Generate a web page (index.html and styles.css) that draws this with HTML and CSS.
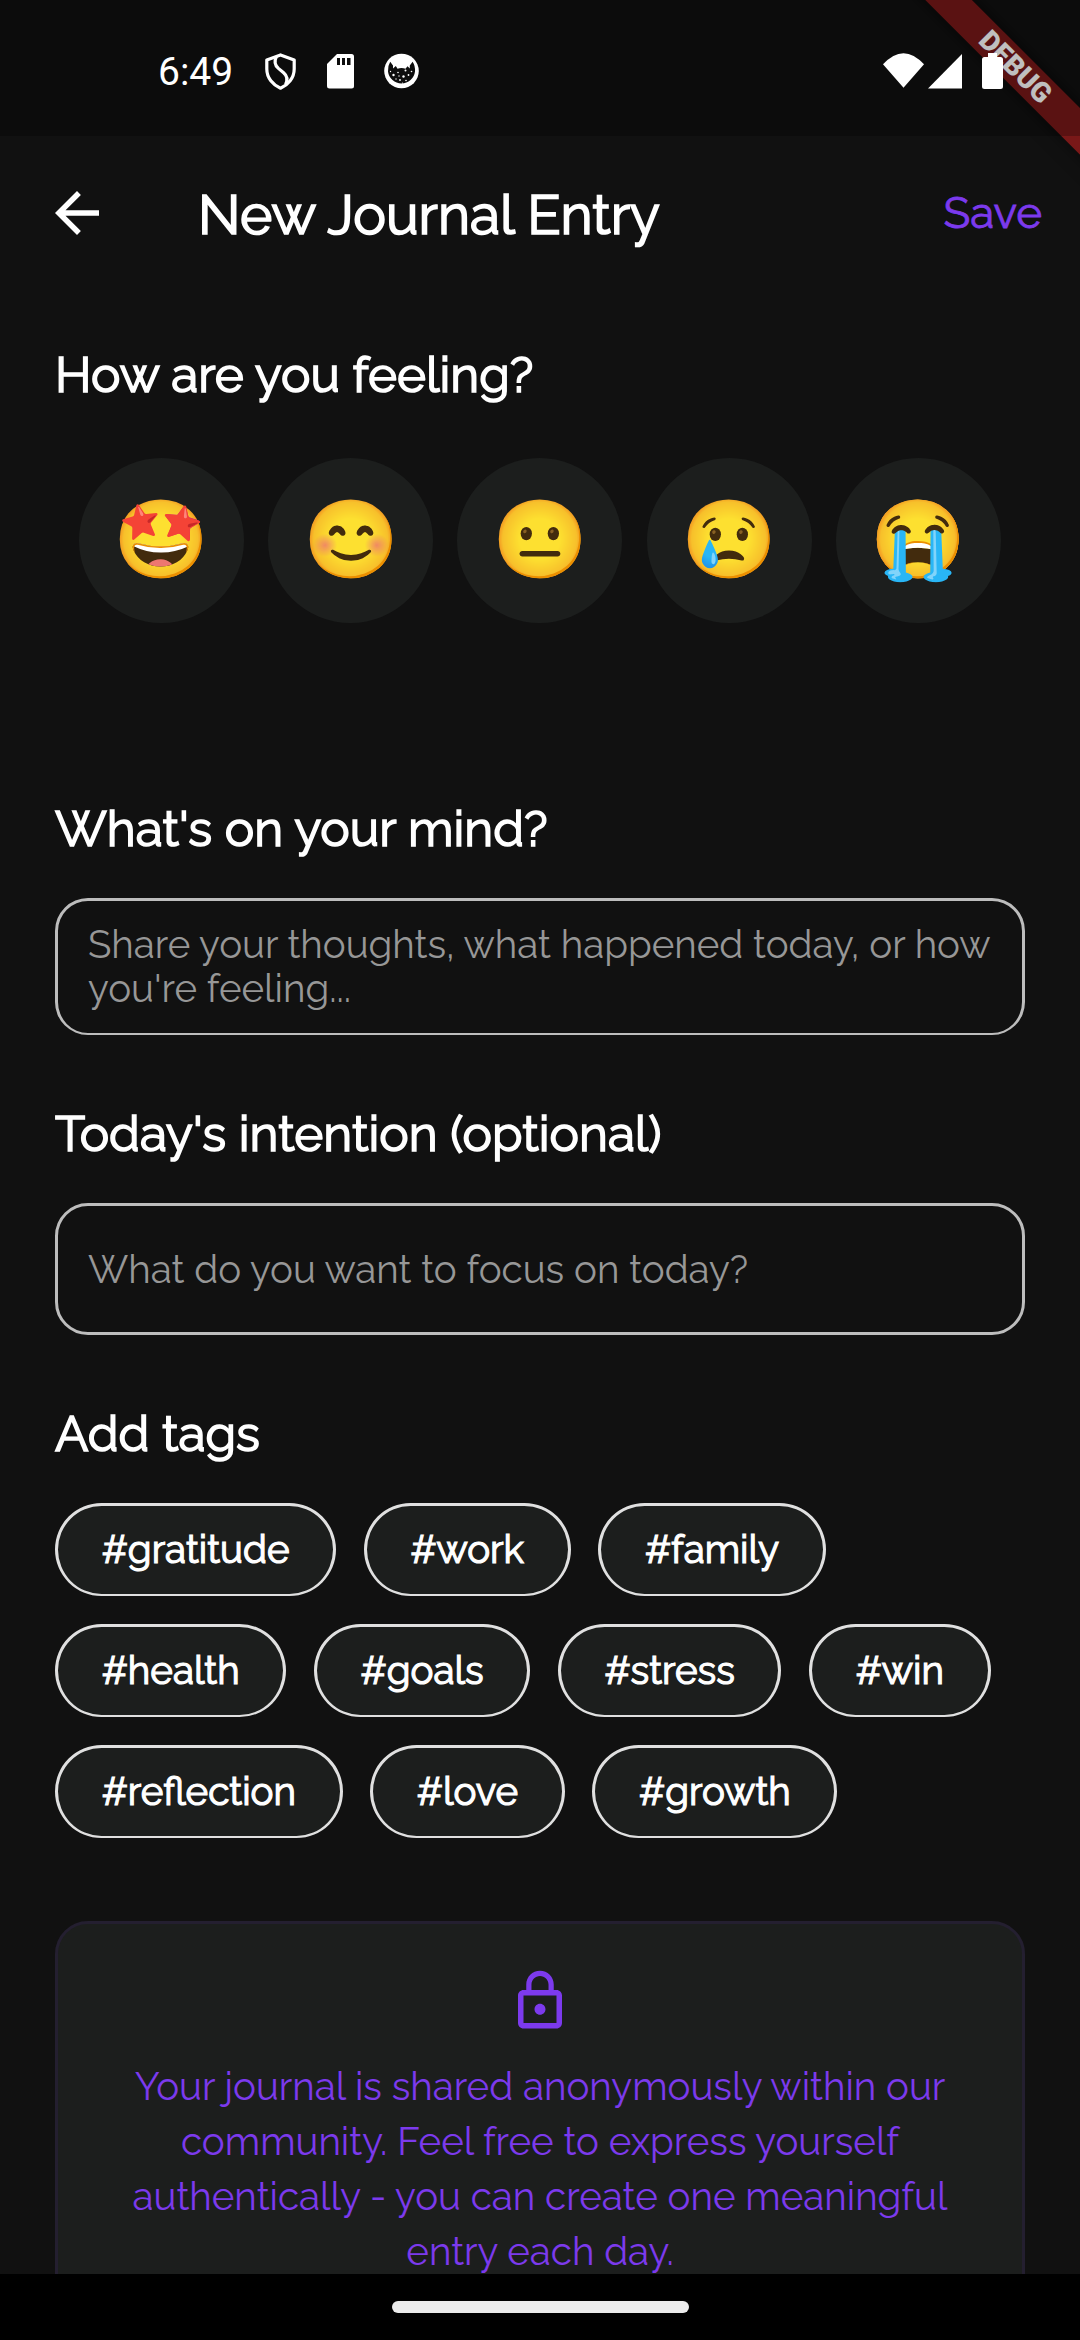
FILE: index.html
```
<!DOCTYPE html>
<html lang="en">
<head>
<meta charset="utf-8">
<title>New Journal Entry</title>
<link rel="stylesheet" href="styles.css">
</head>
<body>
<div class="screen">
  <header class="status-bar">
    <span class="clock">6:49</span>
    <svg class="shield" width="31" height="37" viewBox="0 0 31 37" fill="none" stroke="#fff" stroke-width="3.2" stroke-linejoin="round"><path d="M15.5 1.9 29.2 6.9V16C29.2 25 23 32 15.5 35.2 8 32 1.8 25 1.8 16V6.9Z"/><path d="M11.4 3.6C9.2 8 9.6 12 13.4 15.4L18.6 19.8C22.4 23 22.8 27 20.6 31.4"/></svg>
    <svg class="sd" width="27" height="35" viewBox="0 0 27 35"><path fill="#fff" d="M10 0h14.5A2.5 2.5 0 0 1 27 2.5V32a2.5 2.5 0 0 1-2.5 2.5h-22A2.5 2.5 0 0 1 0 32V10Z"/><path fill="#0d0d0d" d="M10 4h3v7h-3zM15 4h3v7h-3zM20 4h3.500v7H20z"/></svg>
    <svg class="cat" width="35" height="36" viewBox="0 0 35 36"><circle cx="17.500" cy="18" r="17.300" fill="#fff"/><path fill="#0d0d0d" d="M6.200 8.800 9 12.400V15.500L11.800 13 13.500 15.800Q17.500 14.200 21.500 15.800L23.500 13.200 25.800 15.400V12.400L28.600 8.800Q31.400 13 31 18.500A13.600 13.600 0 0 1 4 18.500Q3.600 13 6.200 8.800Z"/><g fill="#fff"><circle cx="9.500" cy="22" r="1.200"/><circle cx="14" cy="19.500" r=".8"/><circle cx="19.500" cy="23.500" r="1.200"/><circle cx="21.500" cy="17.500" r="1"/><circle cx="16" cy="27" r=".9"/><circle cx="24.500" cy="22" r=".9"/><circle cx="6.500" cy="18.500" r=".7"/><circle cx="12" cy="26" r=".7"/><circle cx="27.500" cy="18.500" r=".8"/><circle cx="22" cy="27.500" r=".8"/><circle cx="15" cy="23" r=".7"/><circle cx="18.500" cy="30" r=".6"/></g></svg>
    <span class="fill"></span>
    <svg class="wifi" width="41" height="35" viewBox="0 0 41 35"><path fill="#fff" d="M0 11.300Q20.500-11 41 11.300L20.500 34.800Z"/></svg>
    <svg class="signal" width="34" height="35" viewBox="0 0 34 35"><path fill="#fff" d="M34 0V34.500H0Z"/></svg>
    <svg class="battery" width="21" height="36" viewBox="0 0 21 36"><path fill="#fff" d="M6 0h9v4h3.500A2.500 2.500 0 0 1 21 6.500v27a2.500 2.500 0 0 1-2.500 2.500h-16A2.500 2.500 0 0 1 0 33.500v-27A2.500 2.500 0 0 1 2.500 4H6z"/></svg>
  </header>

  <nav class="app-bar">
    <svg class="back" width="66" height="66" viewBox="0 0 24 24" fill="#fff"><path d="M20 11H7.830l5.590-5.590L12 4l-8 8 8 8 1.410-1.410L7.830 13H20v-2z"/></svg>
    <h1 class="title">New Journal Entry</h1>
    <span class="save">Save</span>
  </nav>

  <main class="content">
    <h2 class="heading">How are you feeling?</h2>
    <div class="moods">
      <span class="mood">🤩</span>
      <span class="mood">😊</span>
      <span class="mood">😐</span>
      <span class="mood">😢</span>
      <span class="mood">😭</span>
    </div>

    <h2 class="heading">What's on your mind?</h2>
    <div class="field field-thoughts">Share your thoughts, what happened today, or how you're feeling...</div>

    <h2 class="heading">Today's intention (optional)</h2>
    <div class="field field-intention">What do you want to focus on today?</div>

    <h2 class="heading">Add tags</h2>
    <div class="tags">
      <span class="tag">#gratitude</span>
      <span class="tag">#work</span>
      <span class="tag">#family</span>
      <span class="tag">#health</span>
      <span class="tag">#goals</span>
      <span class="tag">#stress</span>
      <span class="tag">#win</span>
      <span class="tag">#reflection</span>
      <span class="tag">#love</span>
      <span class="tag">#growth</span>
    </div>

    <section class="notice">
      <svg width="66" height="66" viewBox="0 0 24 24" fill="#7c3aed"><path d="M12 17c1.100 0 2-.9 2-2s-.9-2-2-2-2 .9-2 2 .9 2 2 2zm6-9h-1V6c0-2.760-2.240-5-5-5S7 3.240 7 6v2H6c-1.100 0-2 .9-2 2v10c0 1.100.9 2 2 2h12c1.100 0 2-.9 2-2V10c0-1.100-.9-2-2-2zM8.900 6c0-1.710 1.390-3.100 3.100-3.100s3.100 1.390 3.100 3.100v2H8.900V6zM18 20H6V10h12v10z"/></svg>
      <p class="notice-text">Your journal is shared anonymously within our community. Feel free to express yourself authentically - you can create one meaningful entry each day.</p>
    </section>
  </main>

  <footer class="nav-bar"><span class="handle"></span></footer>
  <div class="debug-banner">DEBUG</div>
</div>
</body>
</html>
```
FILE: styles.css
```
* { box-sizing: border-box; margin: 0; padding: 0; }

body { background: #111; }

.screen {
  position: relative;
  display: flex;
  flex-direction: column;
  width: 1080px;
  height: 2340px;
  overflow: hidden;
  background: #111;
  color: #fff;
  font-family: Raleway, Lato, sans-serif;
  font-weight: 400;
}

.screen svg { display: block; flex: none; }

/* Status bar: a translucent scrim above the debug banner */
.status-bar {
  position: relative;
  z-index: 2;
  display: flex;
  flex: none;
  align-items: flex-start;
  height: 136px;
  padding: 53px 77px 0 158px;
  background: rgba(0, 0, 0, .25);
}
.clock {
  width: 106.500px;
  font: 400 39px/39px Roboto, sans-serif;
}
.shield { margin-right: 31.500px; }
.sd { margin: 1px 30px 0 0; }
.fill { flex: 1; }
.wifi { margin-right: 4px; }
.signal { margin: 1px 20px 0 0; }

.app-bar {
  display: flex;
  flex: none;
  align-items: center;
  height: 154px;
  padding: 0 38px 0 44px;
}
.title {
  flex: 1;
  padding: 4px 0 0 88px;
  font-size: 55px;
  font-weight: 400;
  line-height: 64px;
  -webkit-text-stroke: .03125em currentColor;
}
.save {
  color: #7c3aed;
  font-size: 44px;
  line-height: 52px;
  -webkit-text-stroke: .8px currentColor;
}

.content {
  flex: 1;
  min-height: 0;
  padding: 56px 55px 0;
  overflow: hidden;
}
.heading {
  margin-bottom: 40px;
  font-size: 49.500px;
  font-weight: 400;
  line-height: 58px;
  -webkit-text-stroke: .03125em currentColor;
}

.moods {
  display: flex;
  justify-content: space-evenly;
  margin: 54px 0 177px;
}
.mood {
  display: flex;
  align-items: center;
  justify-content: center;
  width: 165px;
  height: 165px;
  padding-bottom: 2px;
  border-radius: 50%;
  background: #1c1e1d;
  font: 77px/90px "Noto Color Emoji", sans-serif;
}

.field {
  display: flex;
  align-items: center;
  margin-bottom: 70px;
  padding: 0 30px;
  border: 3px solid #bdbdbd;
  border-radius: 33px;
  color: #979797;
  font-size: 38.500px;
  line-height: 44px;
}
.field-thoughts { height: 137px; border-bottom-width: 2px; }
.field-intention { height: 132px; padding-top: 2px; }

.tags {
  display: flex;
  flex-wrap: wrap;
  gap: 28px 27.500px;
}
.tag {
  height: 93px;
  padding: 0 43.700px;
  border: 3px solid #e0e0e0;
  border-bottom-width: 2px;
  border-radius: 47px;
  background: #1c1e1d;
  font-size: 38.500px;
  line-height: 87px;
  -webkit-text-stroke: .03125em currentColor;
}

.notice {
  display: flex;
  flex-direction: column;
  align-items: center;
  height: 440px;
  margin-top: 83px;
  padding: 44px;
  border: 3px solid #241f30;
  border-radius: 33px;
  background: #1c1e1d;
}
.notice-text {
  margin-top: 25px;
  color: #7c3aed;
  font-size: 38.500px;
  line-height: 55px;
  text-align: center;
}

.nav-bar {
  display: flex;
  flex: none;
  justify-content: center;
  height: 66px;
  padding-top: 27px;
  background: #000;
}
.handle {
  width: 297px;
  height: 12px;
  border-radius: 6px;
  background: #ececec;
}

.debug-banner {
  position: absolute;
  z-index: 1;
  top: 49px;
  left: 864px;
  width: 300px;
  height: 33.400px;
  padding-left: 4px;
  transform: rotate(45deg);
  background: rgba(183, 28, 28, .627);
  box-shadow: 0 0 17px rgba(0, 0, 0, .5);
  font: 900 28px/33px Roboto, sans-serif;
  text-align: center;
}
```
